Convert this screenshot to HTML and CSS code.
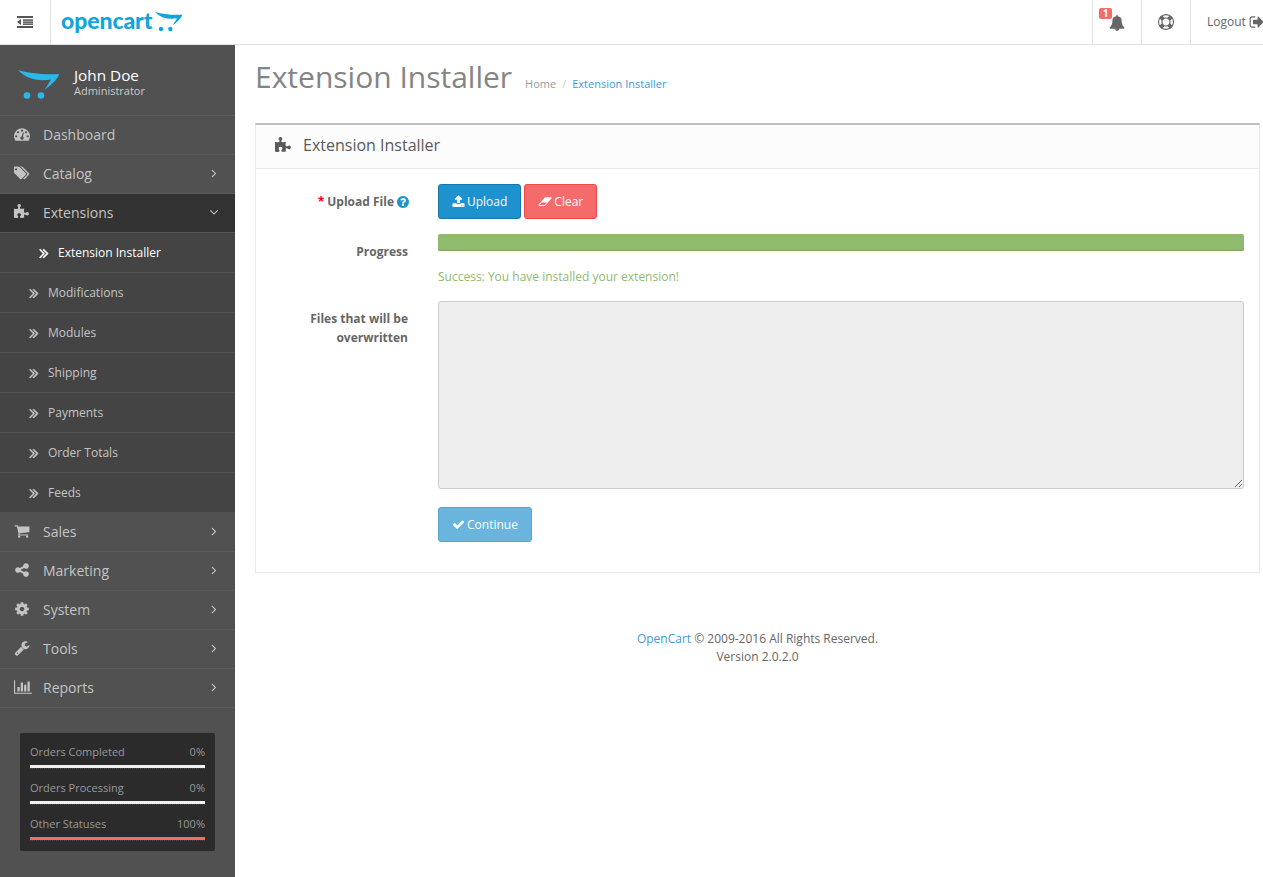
FILE: index.html
```html
<!DOCTYPE html>
<html lang="en">
<head>
<meta charset="utf-8">
<title>Extension Installer</title>
<link rel="stylesheet" href="styles.css">
</head>
<body>
<svg class="sprite" aria-hidden="true">
<symbol id="i-puzzle" viewBox="0 0 1792 1792"><path d="M1664 1098q0 81-44.500 135t-123.500 54q-41 0-77.500-17.500t-59-38-56.500-38-71-17.500q-110 0-110 124 0 39 16 115t15 115v5q-22 0-33 1-34 3-97.500 11.500t-115.500 13.500-98 5q-61 0-103-26.500t-42-83.500q0-37 17.500-71t38-56.500 38-59 17.500-77.500q0-79-54-123.500t-135-44.500q-84 0-143 45.500t-59 127.500q0 43 15 83t33.500 64.500 33.500 53 15 50.500q0 45-46 89-37 35-117 35-95 0-245-24-9-2-27.500-4t-27.500-4l-13-2q-1 0-3-1-2 0-2-1v-1024q2 1 17.500 3.500t34 5 21.500 3.500q150 24 245 24 80 0 117-35 46-44 46-89 0-22-15-50.500t-33.500-53-33.500-64.500-15-83q0-82 59-127.500t144-45.500q80 0 134 44.500t54 123.500q0 41-17.500 77.500t-38 59-38 56.500-17.500 71q0 57 42 83.500t103 26.500q64 0 180-15t163-17v2q-1 2-3.500 17.500t-5 34-3.500 21.500q-24 150-24 245 0 80 35 117 44 46 89 46 22 0 50.500-15t53-33.500 64.500-33.500 83-15q82 0 127.500 59t45.500 143z"/></symbol>
<symbol id="i-cart" viewBox="0 0 1792 1792"><path d="M704 1536q0 52-38 90t-90 38-90-38-38-90 38-90 90-38 90 38 38 90zm896 0q0 52-38 90t-90 38-90-38-38-90 38-90 90-38 90 38 38 90zm128-1088v512q0 24-16.500 42.500t-40.500 21.500l-1044 122q13 60 13 70 0 16-24 64h920q26 0 45 19t19 45-19 45-45 19h-1024q-26 0-45-19t-19-45q0-11 8-31.500t16-36 21.500-40 15.500-29.500l-177-823h-204q-26 0-45-19t-19-45 19-45 45-19h256q16 0 28.500 6.500t19.500 15.500 13 24.500 8 26 5.500 29.500 4.500 26h1201q26 0 45 19t19 45z"/></symbol>
<symbol id="i-share" viewBox="0 0 1792 1792"><path d="M1344 1024q133 0 226.500 93.500t93.500 226.500-93.500 226.500-226.500 93.500-226.500-93.500-93.500-226.500q0-12 2-34l-360-180q-92 86-218 86-133 0-226.500-93.500t-93.500-226.500 93.500-226.500 226.500-93.500q126 0 218 86l360-180q-2-22-2-34 0-133 93.500-226.500t226.500-93.500 226.500 93.500 93.500 226.500-93.500 226.500-226.500 93.500q-126 0-218-86l-360 180q2 22 2 34t-2 34l360 180q92-86 218-86z"/></symbol>
<symbol id="i-cog" viewBox="0 0 1792 1792"><path d="M1152 896q0-106-75-181t-181-75-181 75-75 181 75 181 181 75 181-75 75-181zm512-109v222q0 12-8 23t-20 13l-185 28q-19 54-39 91 35 50 107 138 10 12 10 25t-9 23q-27 37-99 108t-94 71q-12 0-26-9l-138-108q-44 23-91 38-16 136-29 186-7 28-36 28h-222q-14 0-24.500-8.500t-11.500-21.500l-28-184q-49-16-90-37l-141 107q-10 9-25 9-14 0-25-11-126-114-165-168-7-10-7-23 0-12 8-23 15-21 51-66.500t54-70.500q-27-50-41-99l-183-27q-13-2-21-12.500t-8-23.500v-222q0-12 8-23t19-13l186-28q14-46 39-92-40-57-107-138-10-12-10-24 0-10 9-23 26-36 98.500-107.500t94.500-71.500q13 0 26 10l138 107q44-23 91-38 16-136 29-186 7-28 36-28h222q14 0 24.500 8.500t11.500 21.500l28 184q49 16 90 37l142-107q9-9 24-9 13 0 25 10 129 119 165 170 7 8 7 22 0 12-8 23-15 21-51 66.500t-54 70.500q26 50 41 98l183 28q13 2 21 12.500t8 23.500z"/></symbol>
<symbol id="i-wrench" viewBox="0 0 1792 1792"><path d="M448 1472q0-26-19-45t-45-19-45 19-19 45 19 45 45 19 45-19 19-45zm644-420l-682 682q-37 37-90 37-52 0-91-37l-106-108q-38-36-38-90 0-53 38-91l681-681q39 98 114.500 173.500t173.500 114.500zm634-435q0 39-23 106-47 134-164.500 217.500t-258.500 83.500q-185 0-316.500-131.500t-131.500-316.500 131.500-316.500 316.500-131.500q58 0 121.500 16.500t107.500 46.500q16 11 16 28t-16 28l-293 169v224l193 107q5-3 79-48.500t135.500-81 70.500-35.500q15 0 23.500 10t8.500 25z"/></symbol>
<symbol id="i-chart" viewBox="0 0 2048 1792"><path d="M640 896v512h-256v-512h256zm384-512v1024h-256v-1024h256zm1024 1152v128h-2048v-1536h128v1408h1920zm-640-896v768h-256v-768h256zm384-384v1152h-256v-1152h256z"/></symbol>
<symbol id="i-tags" viewBox="0 0 1920 1792"><path d="M384 448q0-53-37.500-90.500t-90.500-37.500-90.500 37.500-37.500 90.500 37.500 90.500 90.500 37.500 90.500-37.500 37.500-90.500zm1067 576q0 53-37 90l-491 492q-39 37-91 37-53 0-90-37l-715-716q-38-37-64.500-101t-26.500-117v-416q0-52 38-90t90-38h416q53 0 117 26.500t102 64.500l715 714q37 39 37 91zm384 0q0 53-37 90l-491 492q-39 37-91 37-36 0-59-14t-53-45l470-470q37-37 37-90 0-52-37-91l-715-714q-38-38-102-64.500t-117-26.500h224q53 0 117 26.500t102 64.500l715 714q37 39 37 91z"/></symbol>
<symbol id="i-gauge" viewBox="0 0 1792 1792"><path d="M384 1152q0-53-37.500-90.500t-90.500-37.500-90.500 37.500-37.500 90.500 37.500 90.500 90.500 37.500 90.500-37.500 37.500-90.500zm192-448q0-53-37.500-90.500t-90.500-37.500-90.500 37.500-37.500 90.500 37.500 90.500 90.500 37.500 90.500-37.500 37.500-90.500zm428 481l101-382q6-26-7.500-48.500t-38.500-29.500-48 6.500-30 39.500l-101 382q-60 5-107 43.500t-63 98.500q-20 77 20 146t117 89 146-20 89-117q16-60-6-117t-72-91zm660-33q0-53-37.500-90.500t-90.500-37.500-90.500 37.500-37.500 90.500 37.500 90.500 90.500 37.500 90.500-37.500 37.500-90.500zm-640-640q0-53-37.500-90.500t-90.500-37.500-90.500 37.500-37.500 90.500 37.500 90.500 90.500 37.500 90.500-37.500 37.500-90.500zm448 192q0-53-37.500-90.500t-90.500-37.500-90.500 37.500-37.500 90.500 37.500 90.500 90.500 37.500 90.500-37.500 37.500-90.500zm320 448q0 261-141 483-19 29-54 29h-1402q-35 0-54-29-141-221-141-483 0-182 71-348t191-286 286-191 348-71 348 71 286 191 191 286 71 348z"/></symbol>
<symbol id="i-bell" viewBox="0 0 1792 1792"><path d="M912 1696q0-16-16-16-59 0-101.500-42.500t-42.500-101.500q0-16-16-16t-16 16q0 73 51.500 124.500t124.500 51.500q16 0 16-16zm816-288q0 52-38 90t-90 38h-448q0 106-75 181t-181 75-181-75-75-181h-448q-52 0-90-38t-38-90q50-42 91-88t85-119.500 74.500-158.500 50-206 19.500-260q0-152 117-282.500t307-158.500q-8-19-8-39 0-40 28-68t68-28 68 28 28 68q0 20-8 39 190 28 307 158.500t117 282.500q0 139 19.500 260t50 206 74.500 158.500 85 119.500 91 88z"/></symbol>
<symbol id="i-ring" viewBox="0 0 1792 1792"><path d="M896 0q182 0 348 71t286 191 191 286 71 348-71 348-191 286-286 191-348 71-348-71-286-191-191-286-71-348 71-348 191-286 286-191 348-71zm0 128q-190 0-361 90l194 194q82-28 167-28t167 28l194-194q-171-90-361-90zm-678 1129l194-194q-28-82-28-167t28-167l-194-194q-90 171-90 361t90 361zm678 407q190 0 361-90l-194-194q-82 28-167 28t-167-28l-194 194q171 90 361 90zm0-384q159 0 271.500-112.500t112.500-271.500-112.500-271.500-271.500-112.500-271.500 112.500-112.500 271.500 112.500 271.500 271.500 112.500zm484-217l194 194q90-171 90-361t-90-361l-194 194q28 82 28 167t-28 167z"/></symbol>
<symbol id="i-signout" viewBox="0 0 1792 1792"><path d="M704 1440q0 4 1 20t.5 26.500-3 23.500-10 19.500-20.500 6.500h-320q-119 0-203.500-84.500t-84.500-203.500v-704q0-119 84.500-203.500t203.500-84.500h320q13 0 22.500 9.500t9.500 22.500q0 4 1 20t.5 26.500-3 23.500-10 19.500-20.500 6.500h-320q-66 0-113 47t-47 113v704q0 66 47 113t113 47h312l11.500 1 11.500 3 8 5.500 7 9 2 13.500zm928-544q0 26-19 45l-544 544q-19 19-45 19t-45-19-19-45v-288h-448q-26 0-45-19t-19-45v-384q0-26 19-45t45-19h448v-288q0-26 19-45t45-19 45 19l544 544q19 19 19 45z"/></symbol>
<symbol id="i-upload" viewBox="0 0 1792 1792"><path d="M1344 1472q0-26-19-45t-45-19-45 19-19 45 19 45 45 19 45-19 19-45zm256 0q0-26-19-45t-45-19-45 19-19 45 19 45 45 19 45-19 19-45zm128-224v320q0 40-28 68t-68 28h-1472q-40 0-68-28t-28-68v-320q0-40 28-68t68-28h427q21 56 70.500 92t110.500 36h256q61 0 110.500-36t70.500-92h427q40 0 68 28t28 68zm-325-648q-17 40-59 40h-256v448q0 26-19 45t-45 19h-256q-26 0-45-19t-19-45v-448h-256q-42 0-59-40-17-39 14-69l448-448q18-19 45-19t45 19l448 448q31 30 14 69z"/></symbol>
<symbol id="i-eraser" viewBox="0 0 2048 1792"><path d="M960 1408l336-384h-768l-336 384h768zm1013-1077q15 34 9.500 71.500t-30.500 65.500l-896 1024q-38 44-96 44h-768q-38 0-69.500-20.500t-47.500-54.500q-15-34-9.500-71.500t30.500-65.500l896-1024q38-44 96-44h768q38 0 70 20.500t47 54.500z"/></symbol>
<symbol id="i-check" viewBox="0 0 1792 1792"><path d="M1671 566q0 40-28 68l-724 724-136 136q-28 28-68 28t-68-28l-136-136-362-362q-28-28-28-68t28-68l136-136q28-28 68-28t68 28l294 295 656-657q28-28 68-28t68 28l136 136q28 28 28 68z"/></symbol>
<symbol id="i-help" viewBox="0 0 1792 1792"><path d="M1024 1376v-192q0-14-9-23t-23-9h-192q-14 0-23 9t-9 23v192q0 14 9 23t23 9h192q14 0 23-9t9-23zm256-672q0-88-55.500-163t-138.500-116-170-41q-243 0-371 213-15 24 8 42l132 100q7 6 19 6 16 0 25-12 53-68 86-92 34-24 86-24 48 0 85.500 26t37.500 59q0 38-20 61t-68 45q-63 28-115.500 86.500t-52.500 125.500v36q0 14 9 23t23 9h192q14 0 23-9t9-23q0-19 21.500-49.500t54.500-49.500q32-18 49-28.500t46-35 44.500-48 28-60.500 12.500-81zm384 192q0 209-103 385.500t-279.500 279.500-385.500 103-385.500-103-279.500-279.500-103-385.500 103-385.500 279.500-279.500 385.500-103 385.500 103 279.500 279.500 103 385.500z"/></symbol>
<symbol id="i-right" viewBox="0 0 1792 1792"><path d="M1171 960q0 13-10 23l-466 466q-10 10-23 10t-23-10l-50-50q-10-10-10-23t10-23l393-393-393-393q-10-10-10-23t10-23l50-50q10-10 23-10t23 10l466 466q10 10 10 23z"/></symbol>
<symbol id="i-down" viewBox="0 0 1792 1792"><path d="M1395 736q0 13-10 23l-466 466q-10 10-23 10t-23-10l-466-466q-10-10-10-23t10-23l50-50q10-10 23-10t23 10l393 393 393-393q10-10 23-10t23 10l50 50q10 10 10 23z"/></symbol>
<symbol id="i-double" viewBox="0 0 1792 1792"><path d="M979 960q0 13-10 23l-466 466q-10 10-23 10t-23-10l-50-50q-10-10-10-23t10-23l393-393-393-393q-10-10-10-23t10-23l50-50q10-10 23-10t23 10l466 466q10 10 10 23zm384 0q0 13-10 23l-466 466q-10 10-23 10t-23-10l-50-50q-10-10-10-23t10-23l393-393-393-393q-10-10-10-23t10-23l50-50q10-10 23-10t23 10l466 466q10 10 10 23z"/></symbol>
<symbol id="i-swoosh" viewBox="0 0 42 30"><path d="M0 0C10 3 26 5 41 4 40 9 34 14 26.500 20 29 16 31 13 33 9.500 24 11 10 11 0 0Z"/><circle cx="9" cy="25.500" r="3.300"/><circle cx="23" cy="25.500" r="3.300"/></symbol>
</svg>

<header class="topbar">
  <div class="toggle">
    <svg class="outdent" viewBox="0 0 16 12"><rect x="0" y="0" width="16" height="2"/><rect x="6" y="3.300" width="10" height="1.500"/><rect x="6" y="5.400" width="10" height="1.500"/><rect x="6" y="7.400" width="10" height="1.500"/><rect x="0" y="10" width="16" height="2"/><path d="M0 6l4-3v6z"/></svg>
  </div>
  <div class="brand">
    <span class="brand-text">opencart</span>
    <svg class="brand-cart"><use href="#i-swoosh"/></svg>
  </div>
  <nav class="top-actions">
    <a class="top-link bell-link"><span class="badge">1</span><svg class="ico bell"><use href="#i-bell"/></svg></a>
    <a class="top-link"><svg class="ico ring"><use href="#i-ring"/></svg></a>
    <a class="top-link logout">Logout <svg class="ico signout"><use href="#i-signout"/></svg></a>
  </nav>
</header>

<div class="layout">
  <aside class="sidebar">
    <div class="profile">
      <svg class="profile-cart"><use href="#i-swoosh"/></svg>
      <div class="profile-text">
        <div class="profile-name">John Doe</div>
        <div class="profile-role">Administrator</div>
      </div>
    </div>
    <ul class="menu">
      <li class="item"><svg class="ico mi"><use href="#i-gauge"/></svg><span class="label">Dashboard</span></li>
      <li class="item"><svg class="ico mi"><use href="#i-tags"/></svg><span class="label">Catalog</span><svg class="ico arrow"><use href="#i-right"/></svg></li>
      <li class="item open"><svg class="ico mi"><use href="#i-puzzle"/></svg><span class="label">Extensions</span><svg class="ico arrow"><use href="#i-down"/></svg></li>
      <li class="sub current"><svg class="ico dbl"><use href="#i-double"/></svg>Extension Installer</li>
      <li class="sub"><svg class="ico dbl"><use href="#i-double"/></svg>Modifications</li>
      <li class="sub"><svg class="ico dbl"><use href="#i-double"/></svg>Modules</li>
      <li class="sub"><svg class="ico dbl"><use href="#i-double"/></svg>Shipping</li>
      <li class="sub"><svg class="ico dbl"><use href="#i-double"/></svg>Payments</li>
      <li class="sub"><svg class="ico dbl"><use href="#i-double"/></svg>Order Totals</li>
      <li class="sub"><svg class="ico dbl"><use href="#i-double"/></svg>Feeds</li>
      <li class="item"><svg class="ico mi"><use href="#i-cart"/></svg><span class="label">Sales</span><svg class="ico arrow"><use href="#i-right"/></svg></li>
      <li class="item"><svg class="ico mi"><use href="#i-share"/></svg><span class="label">Marketing</span><svg class="ico arrow"><use href="#i-right"/></svg></li>
      <li class="item"><svg class="ico mi"><use href="#i-cog"/></svg><span class="label">System</span><svg class="ico arrow"><use href="#i-right"/></svg></li>
      <li class="item"><svg class="ico mi"><use href="#i-wrench"/></svg><span class="label">Tools</span><svg class="ico arrow"><use href="#i-right"/></svg></li>
      <li class="item"><svg class="ico mi mi-wide"><use href="#i-chart"/></svg><span class="label">Reports</span><svg class="ico arrow"><use href="#i-right"/></svg></li>
    </ul>
    <div class="stats">
      <div class="stat"><div class="stat-row"><span>Orders Completed</span><span>0%</span></div><div class="stat-bar"></div></div>
      <div class="stat"><div class="stat-row"><span>Orders Processing</span><span>0%</span></div><div class="stat-bar"></div></div>
      <div class="stat"><div class="stat-row"><span>Other Statuses</span><span>100%</span></div><div class="stat-bar red"></div></div>
    </div>
  </aside>

  <main class="content">
    <div class="page-header">
      <h1>Extension Installer</h1>
      <ol class="crumbs"><li>Home</li><li class="sep">/</li><li class="crumb-link">Extension Installer</li></ol>
    </div>
    <section class="panel">
      <div class="panel-head"><svg class="ico head-ico"><use href="#i-puzzle"/></svg><h3>Extension Installer</h3></div>
      <div class="panel-body">
        <div class="row row-upload">
          <label class="form-label"><span class="req">*</span> Upload File <svg class="ico help"><use href="#i-help"/></svg></label>
          <div class="control btns">
            <button class="btn btn-blue" type="button"><svg class="ico b-ico"><use href="#i-upload"/></svg>Upload</button>
            <button class="btn btn-red" type="button"><svg class="ico b-ico er"><use href="#i-eraser"/></svg>Clear</button>
          </div>
        </div>
        <div class="row row-progress">
          <label class="form-label">Progress</label>
          <div class="control">
            <div class="progress"></div>
            <div class="success">Success: You have installed your extension!</div>
          </div>
        </div>
        <div class="row row-files">
          <label class="form-label">Files that will be overwritten</label>
          <div class="control">
            <textarea class="files" rows="10" readonly></textarea>
            <button class="btn btn-sky" type="button"><svg class="ico b-ico"><use href="#i-check"/></svg>Continue</button>
          </div>
        </div>
      </div>
    </section>
    <footer class="foot"><a class="foot-link">OpenCart</a> © 2009-2016 All Rights Reserved.<br>Version 2.0.2.0</footer>
  </main>
</div>
</body>
</html>
```

FILE: styles.css
```css
* { box-sizing: border-box; }
html, body { margin: 0; padding: 0; height: 100%; }
body {
  font-family: "Open Sans", "Liberation Sans", sans-serif;
  font-size: 12px;
  color: #666;
  background: #fff;
  overflow: hidden;
}
.sprite { display: none; }
.ico { display: block; fill: currentColor; flex: none; }

.topbar {
  height: 45px;
  display: flex;
  align-items: stretch;
  border-bottom: 1px solid #e1e1e1;
  background: #fff;
}
.toggle {
  width: 51px;
  border-right: 1px solid #e1e1e1;
  display: flex;
  align-items: center;
  justify-content: center;
}
.outdent { width: 16px; height: 12px; fill: #555; }
.brand {
  display: flex;
  align-items: flex-start;
  padding: 0 0 0 10px;
  color: #12a5dc;
}
.brand-text {
  font-family: "Lato", "Open Sans", sans-serif;
  font-weight: 900;
  font-size: 23px;
  line-height: 41px;
  letter-spacing: -0.1px;
}
.brand-cart { width: 28px; height: 20px; margin: 12px 0 0 3px; fill: #12a5dc; }
.top-actions { display: flex; margin-left: auto; }
.top-link {
  width: 49px;
  border-left: 1px solid #e1e1e1;
  display: flex;
  align-items: center;
  justify-content: center;
  position: relative;
  color: #666;
}
.bell { width: 16px; height: 16px; }
.bell-link .bell { margin: 2px 0 0 0; }
.badge {
  position: absolute;
  left: 6px;
  top: 8px;
  width: 13px;
  height: 11px;
  background: #f56b6b;
  color: #fff;
  font-size: 10px;
  font-weight: 700;
  line-height: 11px;
  text-align: center;
  border-radius: 2px;
}
.ring { width: 16px; height: 16px; }
.logout { width: 73px; gap: 3px; justify-content: flex-start; padding: 0 0 2px 16px; font-size: 12px; }
.signout { width: 16px; height: 16px; margin-top: 2px; flex: none; }

.layout { display: flex; height: 832px; }

.sidebar {
  width: 235px;
  flex: none;
  background: #515151;
  color: #c4c4c4;
}
.profile {
  height: 71px;
  display: flex;
  align-items: center;
  padding: 4px 0 0 18px;
  border-bottom: 1px solid #5c5c5c;
}
.profile-cart { width: 42px; height: 30px; fill: #2ab8ec; margin: 6px 14px 0 0; }
.profile-name { color: #fff; font-size: 15.300px; line-height: 18px; }
.profile-role { color: #ccc; font-size: 11px; line-height: 14px; }
.menu { list-style: none; margin: 0; padding: 0; }
.item {
  height: 39px;
  display: flex;
  align-items: center;
  padding: 0 15px 2px 14px;
  border-bottom: 1px solid #5a5a5a;
  font-size: 14px;
}
.mi { width: 16px; height: 16px; margin-right: 13px; }
.mi-wide { width: 18px; margin-right: 11px; }
.label { flex: 1; }
.arrow { width: 14px; height: 14px; margin-right: -1px; }
.item.open { background: #333; border-bottom-color: #555; }
.sub {
  height: 40px;
  display: flex;
  align-items: center;
  padding-left: 26px;
  background: #444;
  border-bottom: 1px solid #515151;
  font-size: 12px;
}
.dbl { width: 16px; height: 16px; margin-right: 6px; stroke: currentColor; stroke-width: 60; }
.sub.current { color: #fff; padding-left: 36px; }

.stats {
  width: 195px;
  margin: 25px 0 0 20px;
  padding: 0 10px;
  height: 118px;
  background: #2b2b2b;
  border-radius: 2px;
  font-size: 11px;
  color: #999;
}
.stat { height: 36px; border-bottom: 1px dotted #444; padding-top: 10px; }
.stat-row { display: flex; justify-content: space-between; line-height: 18px; height: 22px; }
.stat-bar { height: 3px; background: #f2f2f2; }
.stat-bar.red { background: #f56b6b; }

.content { flex: 1; padding: 0 3px 0 20px; }
.page-header { display: flex; align-items: baseline; height: 78px; padding-top: 11px; }
h1 {
  margin: 0;
  font-size: 30px;
  font-weight: 400;
  line-height: 42px;
  color: #848484;
}
.crumbs { list-style: none; display: flex; margin: 0 0 0 13px; padding: 0; font-size: 11px; color: #999; }
.sep { margin: 0 6px; color: #ccc; }
.crumb-link { color: #3d9ad6; }

.panel { border: 1px solid #e8e8e8; border-top: 2px solid #bfbfbf; height: 450px; }
.panel-head {
  height: 44px;
  display: flex;
  align-items: center;
  padding: 0 0 3px 19px;
  background: #fcfcfc;
  border-bottom: 1px solid #e8e8e8;
}
.head-ico { width: 17px; height: 17px; color: #595959; margin-right: 11px; }
h3 { margin: 0; font-size: 16px; font-weight: 400; color: #595959; }
.panel-body { padding: 15px 15px 0; }
.row { display: grid; grid-template-columns: 137px 1fr; column-gap: 30px; }
.form-label { font-weight: 700; text-align: right; line-height: 19px; color: #666; }
.row-upload { height: 50px; }
.row-upload .form-label { display: flex; align-items: center; justify-content: flex-end; height: 35px; gap: 2px; }
.req { color: #f00; margin-right: 1px; }
.help { width: 14px; height: 14px; color: #1e91cf; margin: 0 -2px 0 0; }
.btns { display: flex; gap: 3px; height: 35px; }
.btn {
  font: inherit;
  font-size: 12px;
  height: 35px;
  padding: 0 13px;
  border-radius: 3px;
  border: 1px solid;
  color: #fff;
  display: inline-flex;
  align-items: center;
  gap: 2px;
}
.btn-blue { background: #1e91cf; border-color: #1978ab; }
.btn-red { background: #f56b6b; border-color: #f24545; }
.btn-sky { background: #6ab5de; border-color: #57a5cf; }
.b-ico { width: 13px; height: 13px; }
.er { width: 14px; }
.row-progress { height: 67px; }
.row-progress .form-label { padding-top: 8px; }
.progress { height: 17px; background: #8fbb6c; border-radius: 2px; box-shadow: inset 0 -1px 0 #7ea45e; }
.success { color: #8fbb6c; margin-top: 17px; line-height: 18px; }
.row-files .form-label { padding-top: 8px; }
.files {
  display: block;
  width: 100%;
  height: 188px;
  background: #eee;
  border: 1px solid #ccc;
  border-radius: 3px;
  margin: 0 0 18px;
  resize: vertical;
}
.foot { text-align: center; line-height: 18px; padding-top: 57px; }
.foot-link { color: #3d9ad6; }
```
